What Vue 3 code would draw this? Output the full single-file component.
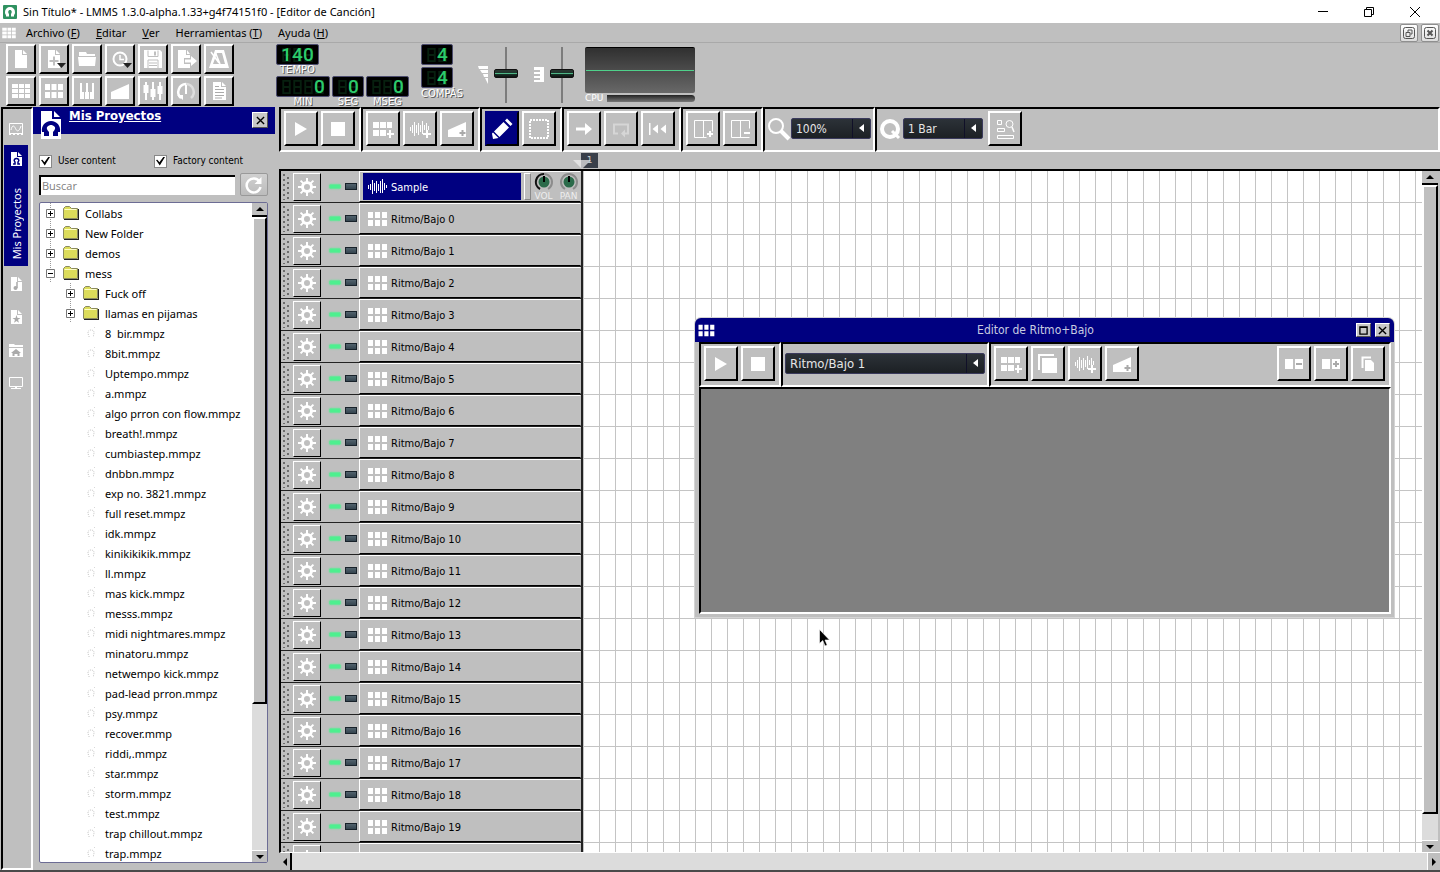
<template>
    <div class="app">
        <header class="titlebar">
            <svg class="logo" viewBox="0 0 14 14" v-html="icons.logo"></svg>
            <span class="title-text">Sin Título* - LMMS 1.3.0-alpha.1.33+g4f74151f0 - [Editor de Canción]</span>
            <div class="win-buttons">
                <button aria-label="Minimizar"><svg viewBox="0 0 12 12"><path d="M1 5.500h10" /></svg></button>
                <button aria-label="Restaurar"><svg viewBox="0 0 12 12"><path d="M1.500 3.500h7v7h-7zM3.500 3.500v-2h7v7h-2" /></svg></button>
                <button aria-label="Cerrar"><svg viewBox="0 0 12 12"><path d="M1 1l10 10M11 1L1 11" /></svg></button>
            </div>
        </header>

        <nav class="menubar">
            <svg class="menu-icon" viewBox="0 0 24 24" v-html="icons.song"></svg>
            <a v-for="m in menus" :key="m.key" href="#">{{ m.pre }}<u>{{ m.key }}</u>{{ m.post }}</a>
            <div class="mdi-buttons">
                <button aria-label="Restaurar ventana"><svg viewBox="0 0 12 12"><rect x="0.500" y="0.500" width="11" height="11" rx="2" /><path d="M3 5.500h4v4H3zM5 5V3h4v4H7.500" /></svg></button>
                <button aria-label="Cerrar ventana"><svg viewBox="0 0 12 12"><rect x="0.500" y="0.500" width="11" height="11" rx="2" /><path class="thick" d="M3.500 3.500l5 5M8.500 3.500l-5 5" /></svg></button>
            </div>
        </nav>

        <div class="main-toolbar">
            <div class="tool-grid">
                <button v-for="t in mainTools" :key="t.icon" class="btn small" :aria-label="t.label">
                    <svg class="icon" viewBox="0 0 24 24" v-html="icons[t.icon]"></svg>
                </button>
            </div>
            <div class="time-block">
                <div class="lcd-row">
                    <div v-for="l in tempoLcd" :key="l.label" class="lcd-cell">
                        <span class="lcd"><span v-for="(d, i) in l.digits" :key="i" class="digit"><svg viewBox="0 0 9 15" v-html="icons.ghost"></svg><b>{{ d }}</b></span></span>
                        <span class="lcd-label">{{ l.label }}</span>
                    </div>
                </div>
                <div class="lcd-row">
                    <div v-for="l in timeLcd" :key="l.label" class="lcd-cell">
                        <span class="lcd"><span v-for="(d, i) in l.digits" :key="i" class="digit"><svg viewBox="0 0 9 15" v-html="icons.ghost"></svg><b>{{ d }}</b></span></span>
                        <span class="lcd-label">{{ l.label }}</span>
                    </div>
                </div>
            </div>
            <div class="signature">
                <span v-for="n in 2" :key="n" class="lcd"><span v-for="(d, i) in [' ', '4']" :key="i" class="digit"><svg viewBox="0 0 9 15" v-html="icons.ghost"></svg><b>{{ d }}</b></span></span>
                <span class="lcd-label">COMPÁS</span>
            </div>
            <label class="slider">
                <svg viewBox="0 0 10 18"><path d="M0 0h10v3H1zM2 4h8v3H4zM5 8h5v3H6zM7 12h3v6z" fill="#fff" /></svg>
                <input type="range" min="0" max="100" value="53" aria-label="Volumen maestro">
            </label>
            <label class="slider">
                <svg viewBox="0 0 10 18"><path d="M0 1h10v15H0v-2h6v-2H0v-2h6V8H0V6h6V4H0z" fill="#fff" /></svg>
                <input type="range" min="0" max="100" value="53" aria-label="Tono maestro">
            </label>
            <div class="scope-block">
                <div class="scope"><i></i></div>
                <div class="cpu"><span>CPU</span><i></i></div>
            </div>
        </div>

        <div class="workspace">
            <aside class="tabs">
                <button v-for="t in sideTabs" :key="t.icon" class="tab" :class="{ active: t.text }" :aria-label="t.label">
                    <svg viewBox="0 0 16 16" v-html="icons[t.icon]"></svg>
                    <span v-if="t.text">{{ t.text }}</span>
                </button>
            </aside>

            <section class="sidebar">
                <div class="side-head">
                    <svg class="side-icon" viewBox="0 0 20 28" v-html="icons.projects"></svg>
                    <h2>Mis Proyectos</h2>
                    <button class="close-btn" aria-label="Cerrar panel"><svg viewBox="0 0 10 10"><path d="M1 1l8 8M9 1L1 9" /></svg></button>
                </div>
                <div class="checks">
                    <label><input type="checkbox" v-model="userContent">User content</label>
                    <label><input type="checkbox" v-model="factoryContent">Factory content</label>
                </div>
                <div class="search">
                    <input v-model="search" type="text" placeholder="Buscar" aria-label="Buscar">
                    <button aria-label="Recargar"><svg viewBox="0 0 18 18"><path d="M14.500 5.500A7 7 0 1 0 15.500 11" fill="none" stroke="#fff" stroke-width="2.500" /><path d="M16.500 1v7h-7z" fill="#fff" /></svg></button>
                </div>
                <div class="tree">
                    <ul>
                        <li v-for="f in tree" :key="f.name" :class="['lvl' + f.level, f.type]">
                            <button v-if="f.type === 'folder'" class="expander" :aria-label="f.name">
                                <svg viewBox="0 0 9 9"><path d="M.5.5h8v8h-8z" fill="#fff" stroke="#777" /><path :d="f.open ? 'M2 4.500h5' : 'M2 4.500h5M4.500 2v5'" stroke="#000" /></svg>
                            </button>
                            <svg v-if="f.type === 'folder'" class="f-icon" viewBox="0 0 16 14" v-html="icons.folder"></svg>
                            <svg v-else class="f-icon" viewBox="0 0 16 14" v-html="icons.file"></svg>
                            <span>{{ f.name }}</span>
                        </li>
                    </ul>
                    <div class="vbar">
                        <button class="arrow up" aria-label="Subir"></button>
                        <div class="vtrack"><div class="thumb tree-thumb"></div></div>
                        <button class="arrow down" aria-label="Bajar"></button>
                    </div>
                </div>
            </section>

            <main class="song">
                <div class="toolbar">
                    <div v-for="(g, i) in songGroups" :key="i" class="group">
                        <button v-for="b in g" :key="b" class="btn" :class="{ on: b === 'pencil' }" :aria-label="b">
                            <svg class="icon" viewBox="0 0 24 24" v-html="icons[b]"></svg>
                        </button>
                    </div>
                    <div class="group combo-group">
                        <svg class="icon" viewBox="0 0 24 24"><circle cx="9" cy="9" r="7" fill="none" stroke="#fff" stroke-width="2" /><path d="M14 14l8 8" stroke="#fff" stroke-width="4" /></svg>
                        <span class="combo"><select aria-label="Zoom"><option>100%</option></select></span>
                    </div>
                    <div class="group combo-group grow">
                        <svg class="icon" viewBox="0 0 24 24"><circle cx="11" cy="12" r="8" fill="none" stroke="#fff" stroke-width="4" /><path d="M13 14l7 7" stroke="#fff" stroke-width="3" /></svg>
                        <span class="combo"><select aria-label="Cuantizar"><option>1 Bar</option></select></span>
                        <button class="btn snap" aria-label="Ajuste proporcional"><svg class="icon" viewBox="0 0 24 24" v-html="icons.snap"></svg></button>
                    </div>
                </div>
                <div class="timeline">
                    <span class="bar-no">1</span>
                    <i class="playhead"></i>
                </div>
                <div class="song-body">
                    <div class="tracks">
                        <div v-for="(t, i) in tracks" :key="i" class="track">
                            <svg class="grip" viewBox="0 0 7 27" v-html="icons.grip"></svg>
                            <button class="gear" aria-label="Acciones de pista"><svg viewBox="0 0 20 20" v-html="icons.gear"></svg></button>
                            <span class="leds"><button class="led green" aria-label="Silenciar"></button><button class="led" aria-label="Solo"></button></span>
                            <div class="track-name" :class="{ sample: i === 0 }">
                                <button class="name-btn">
                                    <svg viewBox="0 0 20 18" v-html="i === 0 ? icons.wave : icons.cells"></svg>{{ t }}
                                </button>
                                <template v-if="i === 0">
                                    <i class="fx"></i>
                                    <span class="knob"><svg viewBox="0 0 20 18" v-html="icons.knobVol"></svg>VOL</span>
                                    <span class="knob"><svg viewBox="0 0 20 18" v-html="icons.knobPan"></svg>PAN</span>
                                </template>
                            </div>
                        </div>
                    </div>
                    <div class="grid"></div>
                    <div class="vbar song-bar">
                        <button class="arrow up" aria-label="Subir"></button>
                        <div class="vtrack"><div class="thumb song-thumb"></div></div>
                        <button class="arrow down" aria-label="Bajar"></button>
                    </div>
                </div>
                <div class="hbar">
                    <button class="arrow left" aria-label="Izquierda"></button>
                    <button class="arrow right" aria-label="Derecha"></button>
                </div>

                <section class="beat-window">
                    <div class="beat-title">
                        <svg viewBox="0 0 20 18" v-html="icons.cells"></svg>
                        <h3>Editor de Ritmo+Bajo</h3>
                        <button class="close-btn" aria-label="Maximizar"><svg viewBox="0 0 10 10"><path d="M1 1h8v8H1zM1 1.500h8" /></svg></button>
                        <button class="close-btn" aria-label="Cerrar editor"><svg viewBox="0 0 10 10"><path d="M1 1l8 8M9 1L1 9" /></svg></button>
                    </div>
                    <div class="beat-frame">
                        <div class="toolbar">
                            <div class="group">
                                <button v-for="b in ['play', 'stop']" :key="b" class="btn" :aria-label="b"><svg class="icon" viewBox="0 0 24 24" v-html="icons[b]"></svg></button>
                            </div>
                            <div class="group combo-group beat-combo">
                                <span class="combo wide"><select aria-label="Ritmo/Bajo"><option>Ritmo/Bajo 1</option></select></span>
                            </div>
                            <div class="group grow">
                                <button v-for="b in ['addBeat', 'clone', 'addSample', 'addAuto']" :key="b" class="btn" :aria-label="b"><svg class="icon" viewBox="0 0 24 24" v-html="icons[b]"></svg></button>
                                <span class="spacer"></span>
                                <button v-for="b in ['stepLess', 'stepMore', 'stepClone']" :key="b" class="btn" :aria-label="b"><svg class="icon" viewBox="0 0 24 24" v-html="icons[b]"></svg></button>
                            </div>
                        </div>
                        <div class="beat-area"></div>
                    </div>
                </section>
                <svg class="cursor" viewBox="0 0 11 18"><path d="M.5.5v14l3.300-3 2.200 5.500 2.200-1L6 11h4.500z" fill="#000" stroke="#fff" stroke-width=".6" /></svg>
            </main>
        </div>
    </div>
</template>

<script setup>
import { ref } from 'vue'

const userContent = ref(true)
const factoryContent = ref(true)
const search = ref('')

const menus = [
    { pre: 'Archivo (', key: 'F', post: ')' },
    { pre: '', key: 'E', post: 'ditar' },
    { pre: '', key: 'V', post: 'er' },
    { pre: 'Herramientas (', key: 'T', post: ')' },
    { pre: 'Ayuda (', key: 'H', post: ')' },
]

const mainTools = [
    { icon: 'newFile', label: 'Nuevo' },
    { icon: 'newTemplate', label: 'Nuevo desde plantilla' },
    { icon: 'open', label: 'Abrir' },
    { icon: 'recent', label: 'Recientes' },
    { icon: 'save', label: 'Guardar' },
    { icon: 'export', label: 'Exportar' },
    { icon: 'metronome', label: 'Metrónomo' },
    { icon: 'song', label: 'Editor de Canción' },
    { icon: 'beat', label: 'Editor de Ritmo+Bajo' },
    { icon: 'piano', label: 'Piano Roll' },
    { icon: 'auto', label: 'Automatización' },
    { icon: 'mixer', label: 'Mezclador' },
    { icon: 'rack', label: 'Controladores' },
    { icon: 'notes', label: 'Notas' },
]

const tempoLcd = [{ label: 'TEMPO', digits: ['1', '4', '0'] }]
const timeLcd = [
    { label: 'MIN', digits: [' ', ' ', ' ', '0'] },
    { label: 'SEG', digits: [' ', '0'] },
    { label: 'MSEG', digits: [' ', ' ', '0'] },
]

const sideTabs = [
    { icon: 'tabPlugins', label: 'Instrumentos' },
    { icon: 'tabProjects', label: 'Mis Proyectos', text: 'Mis Proyectos' },
    { icon: 'tabSamples', label: 'Mis Samples' },
    { icon: 'tabPresets', label: 'Mis Presets' },
    { icon: 'tabHome', label: 'Mi Inicio' },
    { icon: 'tabComputer', label: 'Mi Equipo' },
]

const songGroups = [
    ['play', 'stop'],
    ['addBeat', 'addSample', 'addAuto'],
    ['pencil', 'select'],
    ['arrowRight', 'loop', 'rewind'],
    ['barAdd', 'barRemove'],
]

const folders = [
    ['Collabs', 1], ['New Folder', 1], ['demos', 1], ['mess', 1, true], ['Fuck off', 2], ['llamas en pijamas', 2],
]
const files = [
    '8  bir.mmpz', '8bit.mmpz', 'Uptempo.mmpz', 'a.mmpz', 'algo prron con flow.mmpz', 'breath!.mmpz',
    'cumbiastep.mmpz', 'dnbbn.mmpz', 'exp no. 3821.mmpz', 'full reset.mmpz', 'idk.mmpz', 'kinikikikik.mmpz',
    'll.mmpz', 'mas kick.mmpz', 'messs.mmpz', 'midi nightmares.mmpz', 'minatoru.mmpz', 'netwempo kick.mmpz',
    'pad-lead prron.mmpz', 'psy.mmpz', 'recover.mmp', 'riddi,.mmpz', 'star.mmpz', 'storm.mmpz', 'test.mmpz',
    'trap chillout.mmpz', 'trap.mmpz',
]
const tree = [
    ...folders.map(([name, level, open]) => ({ name, level, open, type: 'folder' })),
    ...files.map(name => ({ name, level: 2, type: 'file' })),
]

const tracks = ['Sample']
for (let i = 0; i < 20; i++) {
    tracks.push('Ritmo/Bajo ' + i)
}
tracks.push('') // last row only peeks out

// shapes shared by several icons
const page = '<path d="M6 3h7v5h5v13H6z M14 3l4 4h-4z" fill="#fff"/>'
const drop = '<path d="M15 16h9l-4.500 5z" fill="#222"/>'
const bars = '<path d="M2.500 10v4M4.500 8v8M6.500 5v14M8.500 8v8M10.500 6v12M12.500 8v7M14.500 4v13M16.500 8v5M18.500 6v8M20.500 9v4" stroke="#fff" stroke-width="1"/>'

const icons = {
    logo: '<rect width="14" height="14" rx="1" fill="#2f9160"/><path d="M3 11.500h3V9C4.500 7 5.500 5 7 5s2.500 2 1 4v2.500h3V10c1-1 1-2 1-3a5 5 0 0 0-10 0c0 1 0 2 1 3z" fill="#fff"/>',
    newFile: page,
    newTemplate: page + '<path d="M12 9.500v9M7.500 14h9" stroke="#bfbfbf" stroke-width="2"/>' + drop,
    open: '<path d="M4 9V5h7l1 2h8v2zM3 10h18l-1 9H4z" fill="#fff"/>',
    recent: '<circle cx="12" cy="12" r="6.500" fill="none" stroke="#fff" stroke-width="2"/><path d="M12 8v4.500h4" fill="none" stroke="#fff" stroke-width="1.500"/>' + drop,
    save: '<path d="M3 3h16l2 2v16H3z" fill="#fff"/><path d="M7 3.500v6h10v-6M7 21v-8h10v8" fill="none" stroke="#bfbfbf"/><path d="M13 4.500h2v4h-2zM8 15.500h8v1H8zM8 18h8v1H8z" fill="#bfbfbf"/>',
    export: '<path d="M4 3h8v5h4v3h-6v6h6v4H4zM13 3l3 4h-3z" fill="#fff"/><path d="M11 12.500h6V9l6 5-6 5v-3.500h-6z" fill="#fff"/>',
    metronome: '<path d="M8 3h9l5 18H2zM10 6L6 17h12L15 6z" fill="#fff" fill-rule="evenodd"/><path d="M4 5l8 11M9 7l4 10" stroke="#fff" stroke-width="1.500"/>',
    song: '<path d="M3 5h6v4H3zM10 5h5v4h-5zM16 5h5v4h-5zM3 10h6v4H3zM10 10h5v4h-5zM16 10h5v4h-5zM3 15h6v4H3zM10 15h5v4h-5zM16 15h5v4h-5z" fill="#fff"/>',
    beat: '<path d="M3 5h5v6H3zM9.500 5h5v6h-5zM16 5h5v6h-5zM3 13h5v6H3zM9.500 13h5v6h-5zM16 13h5v6h-5z" fill="#fff"/>',
    piano: '<path d="M5 4h2v9h2v7H5zM10 13h1V4h2v9h1v7h-4zM17 4h2v16h-4v-7h2z" fill="#fff"/>',
    auto: '<path d="M3 20v-7l18-8v15z" fill="#fff"/>',
    mixer: '<path d="M5 3v18M12 3v18M19 3v18" stroke="#fff" stroke-width="2"/><path d="M2.500 6h5v8h-5zM9.500 10h5v8h-5zM16.500 7h5v8h-5z" fill="#fff"/>',
    rack: '<path d="M7 19A8 8 0 0 1 12 5" fill="none" stroke="#fff" stroke-width="2.500"/><path d="M12 5A8 8 0 0 1 17 19" fill="none" stroke="#dedede" stroke-width="2.500"/><path d="M12 6v9" stroke="#fff" stroke-width="2"/><path d="M3 16h6v5z" fill="#fff"/>',
    notes: '<path d="M6 3h8v5h5v13H6zM15 3l4 4h-4z" fill="#fff"/><path d="M8 10.500h9M8 13.500h9M8 16.500h9M8 7.500h4M8 19h7" stroke="#aaa"/>',
    play: '<path d="M6 5l12 7-12 7z" fill="#fff"/>',
    stop: '<path d="M5 5h14v14H5z" fill="#fff"/>',
    addBeat: '<path d="M2 5h6v6H2zM9 5h6v6H9zM16 5h5v6h-5zM2 13h6v6H2zM9 13h6v6H9zM18 13h2v3h3v2h-3v3h-2v-3h-2v-2h2z" fill="#fff"/>',
    addSample: bars + '<path d="M18 13h2v3h3v2h-3v3h-2v-3h-3v-2h3z" fill="#fff"/>',
    addAuto: '<path d="M3 20v-7l18-8v15z" fill="#fff"/><path d="M17.500 13v6M14.500 16h6" stroke="#aaa" stroke-width="2"/>',
    pencil: '<path d="M4 14.500L13.500 5l5.500 5.500L9.500 20zM15 3.500l2-2L22.500 7l-2 2z" fill="#fff"/><path d="M2 16.500l1-1 5.500 5.500-5.500 1z" fill="#fff"/>',
    select: '<rect x="3" y="3" width="18" height="18" fill="none" stroke="#fff" stroke-width="2" stroke-dasharray="2 1"/>',
    arrowRight: '<path d="M4 10.500h9V6l7 6-7 6v-4.500H4z" fill="#fff"/>',
    loop: '<path d="M9 16.500H5v-9h14v9h-4" fill="none" stroke="#d6d6d6" stroke-width="2"/><path d="M12 16.500l4-4v8z" fill="#d6d6d6"/>',
    rewind: '<path d="M3 6h1.500v12H3zM12 7.500v9L6.500 12zM20 7.500v9L14.500 12z" fill="#fff"/>',
    barAdd: '<path d="M3.500 3.500h18v11M3.500 3.500v17h12M12.500 3.500v17" fill="none" stroke="#fff"/><path d="M19 14v6M16 17h6" stroke="#fff" stroke-width="2"/>',
    barRemove: '<path d="M3.500 3.500h18v8M3.500 3.500v17h18M12.500 3.500v17" fill="none" stroke="#fff"/><path d="M16 16h6" stroke="#fff" stroke-width="2"/>',
    snap: '<path d="M4.500 3.500h4v4h-4zM4.500 11.500h7v3h-7zM4.500 18.500h16v3h-16z" fill="none" stroke="#fff"/><circle cx="16.500" cy="7" r="3.500" fill="none" stroke="#fff"/><path d="M19 10l2 5" stroke="#fff" stroke-width="1.500"/>',
    clone: '<path d="M3 18V3h15" fill="none" stroke="#fff" stroke-width="2"/><path d="M6 6h15v15H6z" fill="#fff"/>',
    stepLess: '<path d="M3 7h8v10H3zM13 7h8v10h-8z" fill="#fff"/><path d="M14 12h6" stroke="#aaa" stroke-width="2"/>',
    stepMore: '<path d="M3 7h8v10H3zM13 7h8v10h-8z" fill="#fff"/><path d="M14 12h6M17 9v6" stroke="#aaa" stroke-width="2"/>',
    stepClone: '<path d="M6.500 16V5.500H15" fill="none" stroke="#fff" stroke-width="2"/><path d="M9 8h6l3 3v8H9z" fill="#fff"/>',
    grip: '<path d="M1 1v26M5 4v22" stroke="#6c6c6c" stroke-width="2" stroke-dasharray="2 3"/>',
    cells: '<path d="M1 2h5v6H1zM8 2h5v6H8zM15 2h5v6h-5zM1 10h5v6H1zM8 10h5v6H8zM15 10h5v6h-5z" fill="#fff"/>',
    wave: '<path d="M1.500 7v4M3.500 6v6M5.500 2v14M7.500 5v8M9.500 3v12M11.500 6v7M13.500 3v12M15.500 1v14M17.500 5v7M19.500 7v3" stroke="#fff"/>',
    gear: '<circle cx="10" cy="10" r="4.500" fill="none" stroke="#fff" stroke-width="3"/><path d="M10 1v4M10 15v4M1 10h4M15 10h4M3.600 3.600l3 3M13.400 13.400l3 3M16.400 3.600l-3 3M6.600 13.400l-3 3" stroke="#fff" stroke-width="2"/>',
    knobVol: '<circle cx="10" cy="9" r="5.500" fill="#2b6b4a"/><path d="M6 16A8 8 0 1 1 14 16" fill="none" stroke="#8c8c8c" stroke-width="2"/><path d="M6 16A8 8 0 0 1 10 1" fill="none" stroke="#111" stroke-width="2"/><path d="M10 3v6" stroke="#000" stroke-width="2"/>',
    knobPan: '<circle cx="10" cy="9" r="5.500" fill="#2b6b4a"/><path d="M6 16A8 8 0 1 1 14 16" fill="none" stroke="#8c8c8c" stroke-width="2"/><path d="M10 3v6" stroke="#000" stroke-width="2"/>',
    folder: '<path d="M.5 12.500v-10l2-2h4l2 2h6v10z" fill="#dcdc5a" stroke="#8a8a60"/><path d="M1.500 3.500h12" stroke="#ffffc8"/><path d="M1 13.500h15M15.500 3v11" stroke="#222"/>',
    file: '<path d="M6 11V9M5.500 9C4 5 6 4 8 4s4 1 2.500 5v2M11 1l1 1" fill="none" stroke="#c8c8c8" stroke-dasharray="1 1"/>',
    ghost: '<path d="M1 1h7v13H1zM1 7.500h7" fill="none" stroke="#07200f" stroke-width="2"/>',
    projects: '<path d="M0 0h11v8h9v20H0z" fill="#fff"/><path d="M13 0l6 6h-6z" fill="#fff"/><path d="M3 25h5v-4c-5-5 0-7 2-7s7 2 2 7v4h5v-4h2c1-6-3-11-9-11S0 15 1 21h2z" fill="#000080"/>',
    tabPlugins: '<path d="M1.500 2.500h13v10h-13z" fill="none" stroke="#fff"/><path d="M3 9c1-5 3-5 4.500-1.500S11 11 13 5" fill="none" stroke="#fff"/><path d="M1 12h2v2H1zM5 12h2v2H5zM9 12h2v2H9zM13 12h2v2h-2z" fill="#fff"/>',
    tabProjects: '<path d="M3 1h6v5h5v9H3zM10 1l4 4h-4z" fill="#fff"/><path d="M5 13h2v-2c-2-2 0-3.500 1.500-3.500S12 9 10 11v2h2" fill="none" stroke="#000080" stroke-width="1.500"/>',
    tabSamples: '<path d="M3 1h6v5h5v9H3zM10 1l4 4h-4z" fill="#fff"/><path d="M9 6v6" stroke="#aaa" stroke-width="1.500"/><circle cx="7.500" cy="12" r="2" fill="#aaa"/>',
    tabPresets: '<path d="M3 1h6v5h5v9H3zM10 1l4 4h-4z" fill="#fff"/><path d="M8.500 6l1 3h3l-2.500 1.800 1 3-2.500-1.800-2.500 1.800 1-3L4.500 9h3z" fill="#aaa"/>',
    tabHome: '<path d="M1 2h5l1 1h8v2H1zM1 6h14v9H1z" fill="#fff"/><path d="M8 7l5 4h-1.500v3h-2v-2h-3v2h-2v-3H3z" fill="#aaa"/>',
    tabComputer: '<path d="M1.500 2.500h13v9h-13z" fill="none" stroke="#fff"/><path d="M7 12h2v1h4v1H3v-1h4z" fill="#fff"/>',
}
</script>

<style>
html,
body {
    margin: 0;
    overflow: hidden;
}
</style>

<style scoped>
.app {
    height: 100vh;
    display: flex;
    flex-direction: column;
    background: #bfbfbf;
    border-bottom: 2px solid #4a4a4a;
    box-sizing: border-box;
    font-family: "Noto Sans", "Open Sans", sans-serif;
    font-size: 11px;
    color: #000;
    position: relative;
}
.app *,
.app *::before {
    box-sizing: border-box;
}
button {
    margin: 0;
    padding: 0;
    border: 0;
    background: none;
    font: inherit;
    color: inherit;
    display: flex;
    align-items: center;
    justify-content: center;
    flex: none;
}
svg {
    display: block;
    flex: none;
}
h2,
h3 {
    margin: 0;
}

/* title and menu */
.titlebar {
    height: 23px;
    background: #fff;
    display: flex;
    align-items: center;
    padding-left: 3px;
    flex: none;
}
.logo {
    width: 14px;
    height: 14px;
    margin-right: 6px;
}
.title-text {
    flex: 1;
}
.win-buttons {
    display: flex;
    margin-right: 2px;
}
.win-buttons button {
    width: 46px;
    height: 22px;
}
.win-buttons svg {
    width: 12px;
    height: 12px;
    fill: none;
    stroke: #000;
}
.menubar {
    height: 20px;
    flex: none;
    display: flex;
    align-items: center;
    border-bottom: 1px solid #a9a9a9;
}
.menubar a {
    color: #000;
    text-decoration: none;
    margin-right: 16px;
}
.menu-icon {
    width: 18px;
    height: 18px;
    margin-right: 8px;
}
.mdi-buttons {
    margin-left: auto;
    margin-right: 1px;
    display: flex;
    gap: 3px;
}
.mdi-buttons button {
    width: 18px;
    height: 18px;
    border: 1px solid #8f8f8f;
    border-radius: 2px;
    background: linear-gradient(#fff, #dcdcdc);
}
.mdi-buttons svg {
    width: 12px;
    height: 12px;
    fill: none;
    stroke: #555;
}
.mdi-buttons .thick {
    stroke-width: 2;
}

/* buttons */
.btn {
    width: 34px;
    height: 35px;
    border: 2px solid;
    border-color: #fff #000 #000 #fff;
    background: #bfbfbf;
}
.btn.small {
    width: 30px;
    height: 30px;
}
.btn.on {
    background: #000080;
    border-color: #000080 #000 #000 #000080;
}
.icon {
    width: 24px;
    height: 24px;
}

/* main toolbar */
.main-toolbar {
    height: 64px;
    flex: none;
    display: flex;
    padding: 1px 0 0 6px;
}
.tool-grid {
    display: grid;
    grid-template-columns: repeat(7, 30px);
    gap: 2px 3px;
    align-content: start;
    margin-right: 42px;
}
.lcd-row {
    display: flex;
    gap: 2px;
    height: 32px;
}
.lcd-cell,
.signature {
    display: flex;
    flex-direction: column;
    align-items: center;
}
.lcd {
    height: 21px;
    display: flex;
    padding: 3px 4px;
    background: #000;
    border: 1px solid #4c4c6e;
    border-radius: 2px;
    flex: none;
}
.digit {
    width: 11px;
    height: 15px;
    position: relative;
    display: flex;
    justify-content: center;
}
.digit svg {
    width: 9px;
    height: 14px;
}
.digit b {
    position: absolute;
    inset: 0;
    text-align: center;
    font: 500 19px/14px Roboto, sans-serif;
    color: #2ccb6c;
}
.lcd-label {
    font: 10px/10px "DejaVu Sans", sans-serif;
    color: #fff;
    text-shadow: 1px 1px 0 #555;
}
.signature {
    align-items: flex-start;
    margin-left: 12px;
    margin-right: 15px;
    gap: 2px;
}
.signature .lcd-label {
    line-height: 8px;
}
.slider {
    display: flex;
    gap: 6px;
    margin-right: 16px;
    height: 62px;
    align-items: center;
}
.slider svg {
    width: 10px;
    height: 18px;
}
.slider input {
    appearance: none;
    writing-mode: vertical-lr;
    direction: rtl;
    width: 24px;
    height: 56px;
    margin: 0;
    background: linear-gradient(90deg, transparent 11px, #7c7c7c 11px, #7c7c7c 13px, transparent 13px);
}
.slider input::-webkit-slider-thumb {
    appearance: none;
    width: 24px;
    height: 9px;
    border: 1px solid #111;
    border-radius: 2px;
    background: linear-gradient(#26352f 2px, #17372a 3px, #4fb586 3px, #4fb586 4px, #17372a 4px, #111);
}
.scope-block {
    margin-left: -5px;
    padding-top: 3px;
    width: 110px;
}
.scope {
    height: 46px;
    display: flex;
    align-items: center;
    padding: 0 1px;
    border-top: 1px solid #000;
    border-radius: 2px;
    background: linear-gradient(#303030, #686868);
}
.scope i {
    flex: 1;
    height: 1px;
    background: #4fd08a;
}
.cpu {
    display: flex;
    align-items: center;
    gap: 4px;
    font: 9px/10px "DejaVu Sans", sans-serif;
    color: #fff;
}
.cpu i {
    flex: 1;
    height: 7px;
    border-radius: 0 4px 4px 0;
    background: linear-gradient(#222, #777);
}

/* side tabs */
.workspace {
    flex: 1;
    min-height: 0;
    display: flex;
}
.tabs {
    width: 32px;
    margin-left: 1px;
    flex: none;
    border: 2px solid;
    border-color: #000 #fff #fff #000;
    display: flex;
    flex-direction: column;
    align-items: center;
    padding: 3px 2px 0 0;
}
.tab {
    width: 24px;
    height: 33px;
    flex-direction: column;
}
.tab svg {
    width: 16px;
    height: 16px;
}
.tab.active {
    height: 121px;
    background: #000080;
    color: #fff;
    justify-content: flex-start;
    padding-top: 6px;
    margin-bottom: 1px;
}
.tab span {
    writing-mode: vertical-rl;
    transform: rotate(180deg);
    margin-top: 21px;
}

/* project browser */
.sidebar {
    width: 242px;
    flex: none;
    display: flex;
    flex-direction: column;
    margin-right: 4px;
}
.side-head {
    height: 27px;
    flex: none;
    background: #000080;
    display: flex;
    padding: 0 7px 0 8px;
    color: #fff;
}
.side-icon {
    width: 20px;
    height: 28px;
    margin-top: 4px;
    margin-right: 8px;
}
.side-head h2 {
    flex: 1;
    font: bold 13px/18px "DejaVu Sans Condensed", "DejaVu Sans", sans-serif;
    text-decoration: underline;
}
.close-btn {
    width: 15px;
    height: 14px;
    background: #c8c8c8;
    border: 1px solid;
    border-color: #fff #555 #555 #fff;
}
.side-head .close-btn {
    width: 16px;
    height: 16px;
    margin-top: 5px;
}
.close-btn svg {
    width: 9px;
    height: 9px;
    fill: none;
    stroke: #000;
    stroke-width: 1.500;
}
.checks {
    display: grid;
    grid-template-columns: 115px 1fr;
    padding: 20px 0 0 6px;
}
.checks label {
    display: flex;
    align-items: center;
    gap: 6px;
    font: 10px/14px "DejaVu Sans Condensed", "DejaVu Sans", sans-serif;
}
.checks input {
    appearance: none;
    width: 13px;
    height: 13px;
    margin: 0;
    background: #fff;
    border: 1px solid #888;
    display: flex;
    align-items: center;
    justify-content: center;
}
.checks input:checked::before {
    content: "";
    width: 9px;
    height: 9px;
    background: #000;
    clip-path: polygon(0 40%, 15% 35%, 38% 65%, 85% 0, 100% 5%, 42% 100%);
}
.search {
    display: flex;
    align-items: center;
    gap: 5px;
    margin: 5px 7px 6px 6px;
}
.search input {
    flex: 1;
    min-width: 0;
    height: 20px;
    padding: 0 1px;
    border: 0;
    border-top: 2px solid #000;
    border-left: 2px solid #000;
    font: 11px "Open Sans", "Noto Sans", sans-serif;
    background: #fff;
}
.search input::placeholder {
    color: #808080;
}
.search button {
    width: 28px;
    height: 23px;
    border: 1px solid #999;
    border-radius: 2px;
    background: linear-gradient(#d0d0d0, #bcbcbc);
}
.search svg {
    width: 18px;
    height: 18px;
}
.tree {
    flex: 1;
    min-height: 0;
    display: flex;
    margin: 0 7px 7px 6px;
    background: #fff;
    border: 1px solid #6c6c94;
    border-radius: 2px;
}
.tree ul {
    flex: 1;
    min-width: 0;
    margin: 0;
    padding: 0;
    list-style: none;
    overflow: hidden;
}
.tree li {
    height: 20px;
    display: flex;
    align-items: center;
    white-space: pre;
    padding-left: 6px;
}
.tree li.lvl2 {
    padding-left: 26px;
}
.tree li.file {
    padding-left: 43px;
}
.expander {
    width: 9px;
    height: 20px;
    margin-right: 8px;
    background: repeating-linear-gradient(#999 0 1px, #fff 1px 2px) center / 1px 100% no-repeat;
}
.expander svg {
    width: 9px;
    height: 9px;
}
.f-icon {
    width: 16px;
    height: 14px;
    margin-right: 6px;
}

/* scroll bars */
.vbar {
    width: 15px;
    flex: none;
    display: flex;
    flex-direction: column;
    background: #dcdcdc;
}
.arrow {
    background: #bfbfbf;
    width: 100%;
    height: 12px;
}
.arrow::before {
    content: "";
    border: 4px solid transparent;
}
.arrow.up {
    height: 14px;
    border-bottom: 2px solid #000;
}
.arrow.up::before {
    border-top: 0;
    border-bottom-color: #000;
}
.arrow.down {
    border-top: 1px solid #fff;
}
.arrow.down::before {
    border-bottom: 0;
    border-top-color: #000;
}
.vtrack {
    flex: 1;
}
.thumb {
    background: #bfbfbf;
    border: 2px solid;
    border-color: #fff #000 #000 #fff;
}
.tree-thumb {
    height: 77%;
}
.song-thumb {
    height: 96%;
}

/* song editor */
.song {
    flex: 1;
    min-width: 0;
    display: flex;
    flex-direction: column;
    position: relative;
}
.toolbar {
    display: flex;
    height: 45px;
    flex: none;
}
.group {
    display: flex;
    align-items: center;
    gap: 3px;
    padding: 0 4px 2px 3px;
    border: 2px solid;
    border-color: #000 #fff #fff #000;
}
.group.grow {
    flex: 1;
}
.combo-group {
    gap: 0;
    padding: 0 2px 2px;
}
.combo {
    width: 80px;
    height: 21px;
    position: relative;
    display: flex;
}
.combo::after {
    content: "";
    position: absolute;
    right: 7px;
    top: 6px;
    border: 4px solid transparent;
    border-left: 0;
    border-right: 5px solid #fff;
}
.combo select {
    appearance: none;
    width: 100%;
    border: 1px solid #3a3a5c;
    border-radius: 2px;
    padding: 0 4px;
    font: 12px "DejaVu Sans Condensed", "DejaVu Sans", sans-serif;
    color: #e6e6e6;
    background: linear-gradient(90deg, transparent calc(100% - 18px), #101028 calc(100% - 18px), #101028 calc(100% - 17px), transparent calc(100% - 17px)), linear-gradient(#2c3238, #1c2024);
}
.combo.wide {
    width: 200px;
}
.combo.wide select {
    font-size: 13px;
}
.snap {
    margin-left: 5px;
}
.spacer {
    flex: 1;
}
.timeline {
    height: 19px;
    flex: none;
    position: relative;
    border-bottom: 2px solid #000;
}
.bar-no {
    position: absolute;
    left: 302px;
    top: 1px;
    width: 17px;
    height: 15px;
    background: #3a404a;
    color: #ccc;
    font: 9px/14px "DejaVu Sans", sans-serif;
    text-align: center;
}
.playhead {
    position: absolute;
    left: 294px;
    bottom: 0;
    border: 9px solid transparent;
    border-bottom: 0;
    border-top-color: rgba(240, 240, 240, .7);
}
.song-body {
    flex: 1;
    min-height: 0;
    display: flex;
    overflow: hidden;
    border-left: 2px solid #000;
    border-bottom: 1px solid #fff;
}
.tracks {
    width: 302px;
    flex: none;
    border-right: 2px solid #222;
}
.track {
    height: 32px;
    display: flex;
    align-items: center;
    border-bottom: 1px solid #222;
}
.grip {
    width: 7px;
    height: 27px;
    margin: 0 3px 0 2px;
}
.gear {
    width: 28px;
    height: 28px;
    border: 1px solid;
    border-color: #fff #000 #000 #fff;
}
.gear svg {
    width: 20px;
    height: 20px;
}
.leds {
    display: flex;
    flex: none;
    gap: 4px;
    width: 38px;
    padding-left: 8px;
    align-items: center;
}
.led {
    width: 12px;
    height: 7px;
    background: linear-gradient(#52636e, #34444e);
    border: 1px solid #18222a;
}
.led.green {
    height: 5px;
    background: #4df08f;
    border: 1px solid #6be39b;
    border-radius: 2px;
    box-shadow: 0 0 2px #6be39b;
}
.track-name {
    flex: 1;
    min-width: 0;
    align-self: stretch;
    display: flex;
    align-items: center;
    border: 1px solid;
    border-color: #fff transparent #000 #fff;
    font: 11px "DejaVu Sans Condensed", "DejaVu Sans", sans-serif;
}
.name-btn {
    padding: 1px 0 0 7px;
    height: 27px;
    justify-content: flex-start;
}
.name-btn svg {
    width: 20px;
    height: 18px;
    margin-right: 4px;
}
.sample .name-btn {
    width: 158px;
    margin-left: 3px;
    padding-left: 4px;
    background: #000080;
    color: #fff;
}
.fx {
    flex: none;
    width: 7px;
    height: 27px;
    margin-left: 3px;
    border: 1px solid;
    border-color: #fff #888 #888 #fff;
}
.knob {
    flex: none;
    width: 25px;
    display: flex;
    flex-direction: column;
    align-items: center;
    color: #eee;
    font: 9px/10px "DejaVu Sans", sans-serif;
}
.knob svg {
    width: 20px;
    height: 18px;
}
.grid {
    flex: 1;
    background:
        linear-gradient(90deg, #c4c4c4 1px, transparent 1px) 0 0 / 16px 32px,
        linear-gradient(transparent 31px, #c4c4c4 31px) 0 0 / 16px 32px,
        #fff;
}
.song-bar {
    width: 18px;
    border-right: 2px solid #bfbfbf;
}
.hbar {
    height: 17px;
    flex: none;
    display: flex;
    justify-content: space-between;
    background: #dcdcdc;
}
.hbar .arrow {
    height: 17px;
    width: 13px;
}
.arrow.left {
    border-right: 2px solid #000;
}
.arrow.left::before {
    border-left: 0;
    border-right-color: #000;
}
.arrow.right {
    border-left: 1px solid #fff;
}
.arrow.right::before {
    border-right: 0;
    border-left-color: #000;
}

/* beat editor window */
.beat-window {
    position: absolute;
    left: 416px;
    top: 211px;
    width: 699px;
    height: 299px;
    display: flex;
    flex-direction: column;
    border-radius: 6px 6px 0 0;
    background: #bfbfbf;
    box-shadow: 0 0 0 1px #d4d4d4;
}
.beat-title {
    height: 24px;
    flex: none;
    display: flex;
    align-items: center;
    gap: 4px;
    padding: 0 4px 0 2px;
    background: #000080;
    border-radius: 6px 6px 0 0;
    color: #c8cce0;
}
.beat-title > svg {
    width: 18px;
    height: 15px;
}
.beat-title h3 {
    flex: 1;
    text-align: center;
    font: 12px "DejaVu Sans Condensed", "DejaVu Sans", sans-serif;
}
.beat-frame {
    flex: 1;
    display: flex;
    flex-direction: column;
    margin: 0 3px 3px 4px;
}
.beat-area {
    flex: 1;
    background: #808080;
    border: 2px solid;
    border-color: #000 #fff #fff #000;
}
.cursor {
    position: absolute;
    left: 540px;
    top: 522px;
    width: 11px;
    height: 18px;
}
</style>
